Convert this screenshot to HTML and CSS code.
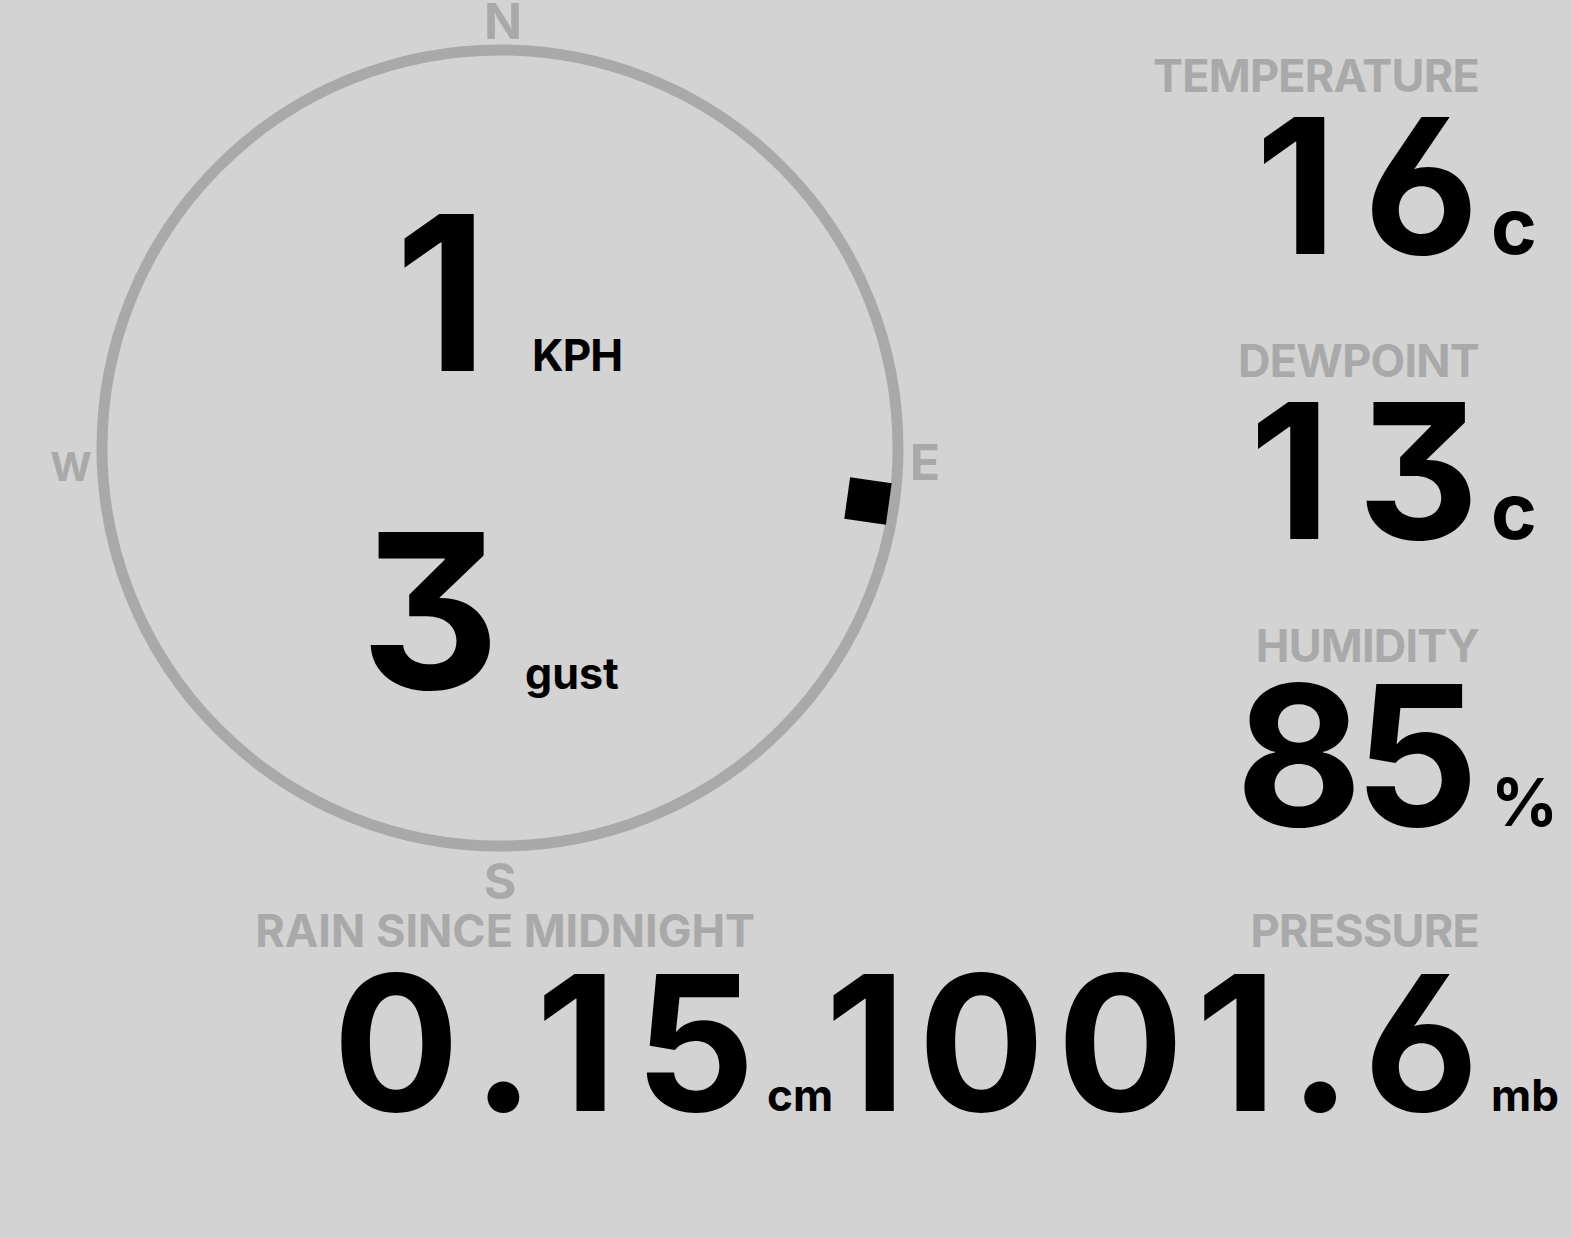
FILE: index.html
```html
<!DOCTYPE html>
<html>
<head>
    <title>Weather</title>
    <link rel="stylesheet" href="styles.css">
</head>
<body>
    <div class="board">
        <div class="top">
            <div class="compass">
                <svg class="dial" width="1000" height="855" viewBox="0 0 1000 855">
                    <circle class="ring" cx="500" cy="448" r="398"/>
                    <text class="point" x="503" y="39">N</text>
                    <text class="point" x="925" y="480">E</text>
                    <text class="point" x="500" y="899">S</text>
                    <text class="point small" x="71" y="481">W</text>
                    <rect class="heading" x="-21" y="-21" width="42" height="42" transform="translate(868 501) rotate(8)"/>
                </svg>
                <div class="wind">
                    <div class="speed avg">1</div><div class="wind-unit kph">KPH</div>
                    <div class="speed">3</div><div class="wind-unit gust">gust</div>
                </div>
            </div>
            <div class="readings">
                <div class="reading">
                    <div class="label">TEMPERATURE</div>
                    <div class="num">16</div><div class="unit deg">c</div>
                </div>
                <div class="reading">
                    <div class="label">DEWPOINT</div>
                    <div class="num">13</div><div class="unit deg">c</div>
                </div>
                <div class="reading">
                    <div class="label">HUMIDITY</div>
                    <div class="num wide">85</div><div class="unit pct">%</div>
                </div>
            </div>
        </div>
        <div class="bottom">
            <div class="reading rain">
                <div class="label">RAIN SINCE MIDNIGHT</div>
                <div class="num">0.15</div><div class="unit small">cm</div>
            </div>
            <div class="reading">
                <div class="label">PRESSURE</div>
                <div class="num">1001.6</div><div class="unit small">mb</div>
            </div>
        </div>
    </div>
</body>
</html>
```

FILE: styles.css
```css
html, body {
    margin: 0;
    padding: 0;
}

body {
    background-color: lightgray;
    color: #000;
    font-family: "Inter", "Noto Sans", sans-serif;
    font-weight: 700;
    font-feature-settings: "cv03" 1, "cv09" 1;
}

.board {
    width: 1571px;
}

.top {
    display: flex;
    height: 855px;
}

/* wind dial */
.compass {
    position: relative;
    width: 1000px;
    height: 855px;
}

.dial {
    display: block;
    overflow: visible;
}

.ring {
    fill: none;
    stroke: darkgray;
    stroke-width: 11;
}

.point {
    fill: darkgray;
    font-family: "Inter", "Noto Sans", sans-serif;
    font-weight: 700;
    font-size: 50px;
    text-anchor: middle;
}

.point.small {
    font-size: 40px;
}

.heading {
    fill: #000;
}

.wind {
    position: absolute;
    top: 185px;
    left: 0;
    width: 1000px;
    display: grid;
    grid-template-columns: 500px 500px;
    row-gap: 102px;
    align-items: baseline;
}

.speed {
    text-align: right;
    font-size: 216px;
    line-height: 216px;
}

.speed.avg {
    padding-right: 12px;
}

.wind-unit {
    font-size: 44px;
    line-height: 44px;
}

.kph {
    padding-left: 32px;
    letter-spacing: -1px;
}

.gust {
    font-size: 43px;
    padding-left: 25px;
}

/* readings */
.readings {
    flex: 1;
    display: flex;
    flex-direction: column;
    align-items: flex-end;
    padding-right: 2px;
}

.reading {
    display: grid;
    grid-template-columns: auto 78px;
    column-gap: 12px;
    align-items: baseline;
    height: 285px;
    box-sizing: border-box;
    padding-top: 56px;
}

.label {
    grid-column: 1;
    text-align: right;
    color: darkgray;
    font-size: 45px;
    line-height: 40px;
    letter-spacing: -0.8px;
    margin-bottom: -6px;
}

.rain .label {
    letter-spacing: 0;
}

.num {
    grid-column: 1;
    text-align: right;
    font-size: 188px;
    line-height: 150px;
    letter-spacing: 12px;
    margin-right: -12px;
}

.readings .num {
    letter-spacing: 27px;
    margin-right: -27px;
}

.readings .num.wide {
    font-size: 195px;
    letter-spacing: -8px;
    margin-right: 8px;
}

.rain .num {
    letter-spacing: 18px;
    margin-right: -18px;
}

.unit {
    grid-column: 2;
    line-height: 1;
}

.deg {
    font-size: 78px;
}

.pct {
    font-size: 66px;
}

.unit.small {
    font-size: 44px;
}

.bottom {
    display: flex;
    justify-content: flex-end;
    padding-right: 2px;
}

.rain {
    margin-right: -20px;
}
```
